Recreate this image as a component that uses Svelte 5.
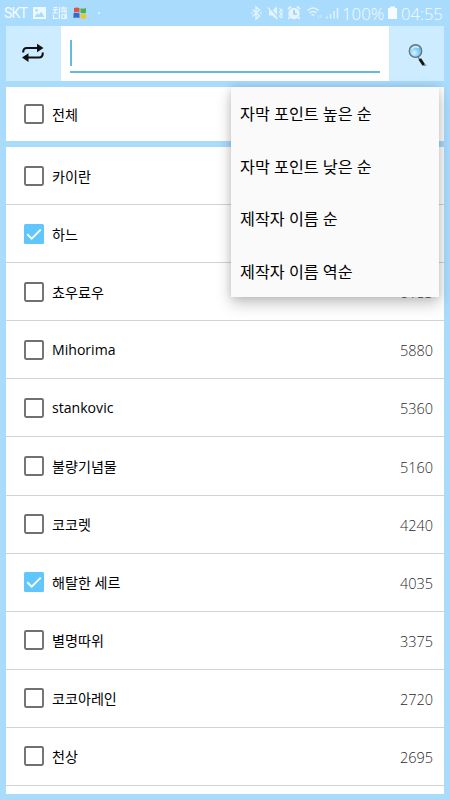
<script>
	let query = '';

	let makers = [
		{ name: '카이란', point: 8120 },
		{ name: '하느', point: 7315, checked: true },
		{ name: '쵸우료우', point: 6185 },
		{ name: 'Mihorima', point: 5880 },
		{ name: 'stankovic', point: 5360 },
		{ name: '불량기념물', point: 5160 },
		{ name: '코코렛', point: 4240 },
		{ name: '해탈한 세르', point: 4035, checked: true },
		{ name: '별명따위', point: 3375 },
		{ name: '코코아레인', point: 2720 },
		{ name: '천상', point: 2695 }
	];

	const sorts = ['자막 포인트 높은 순', '자막 포인트 낮은 순', '제작자 이름 순', '제작자 이름 역순'];

	let all = false;
</script>

{#snippet box(checked)}
	<svg class="box" width="20" height="20" viewBox="0 0 20 20">
		{#if checked}
			<rect width="20" height="20" rx="1.5" fill="#61c6fb" />
			<path d="M3.2 10.3l4.500 4.400 9-9" fill="none" stroke="#fff" stroke-width="1.900" />
		{:else}
			<rect x="1" y="1" width="18" height="18" rx="1.200" fill="#fff" stroke="#707070" stroke-width="1.900" />
		{/if}
	</svg>
{/snippet}

<main>
	<header class="status">
		<span class="carrier">SKT</span>
		<svg class="notices" width="72" height="26" viewBox="0 0 72 26">
			<path fill="#edf8ff" fill-rule="evenodd" d="M1 7h13v12H1zM2.5 17h10L9.3 11.8l-2.5 3-1.6-1.5zM4.5 9a1.3 1.3 0 1 0 .1 0z" />
			<path d="M21.500 7.700h4M20.800 9.700h5M23 10.200v3M20.500 13h5.500M27.500 7v6.500M29 8.200h4M31 6.500v2M30 10h2.500v2H30zM34 7v6.500M21.500 14.500v4h4M27.300 14v5M30 14.500h3v4h-3zM34.300 14v5" fill="none" stroke="#edf8ff" stroke-width="1.200" />
			<path fill="#df5440" d="M42 8q2.500-1 5.500 0v4.500q-2.500-1-5.500 0z" />
			<path fill="#52ae43" d="M48.500 8.300q3 1 5.500-.3v4.800q-2.500 1-5.500 0z" />
			<path fill="#3867ca" d="M41.500 13.300q3-1 6 0v4.600q-3-1-6 0z" />
			<path fill="#f0c42c" d="M48.500 13.800q3 1 5.500 0v4.600q-2.500 1-5.500-.4z" />
			<circle cx="67" cy="13" r="1" fill="#edf8ff" />
		</svg>
		<svg class="signals" width="92" height="26" viewBox="0 0 92 26">
			<path d="M2.500 9.500l7 6.500-3.500 3V7l3.500 3-7 6.500M1 13h1.500M10 13h1.500" fill="none" stroke="#e4f4ff" stroke-width="1.400" />
			<path d="M19 10.500h3l5-4v13l-5-4h-3z" fill="#e4f4ff" />
			<path d="M18.800 6.500L28.500 18" stroke="#a9dafa" stroke-width="1.200" />
			<path d="M18 7.500L27.500 19M29.500 8l1.500 2-1.500 2 1.500 2-1.500 2 1.500 2M32 9v9" fill="none" stroke="#e4f4ff" stroke-width="1.200" />
			<circle cx="44" cy="13.500" r="5.700" fill="#e4f4ff" />
			<path d="M38 9l3-2.500M47 6.500L50 9M39.800 17l-1.500 2M48.200 17l1.500 2" stroke="#e4f4ff" stroke-width="1.800" />
			<path d="M44 10v4h3" fill="none" stroke="#88bfe4" stroke-width="1.200" />
			<g fill="none" stroke="#e4f4ff" stroke-width="1.400">
				<path d="M57.500 10.500q5.500-5 11 0M59.500 13q3.500-3 7 0M61.500 15.300q1.500-1.300 3 0" />
			</g>
			<path d="M68.500 18v-3M71 15v3" stroke="#cfeaff" stroke-width="1" />
			<path d="M77 18.500v-2M80.500 18.500v-4.500M84 18.500v-7.500" stroke="#e4f4ff" stroke-width="1.400" />
			<path d="M87.500 18.500V8" stroke="#e4f4ff" stroke-width="1.500" />
		</svg>
		<span class="percent">100%</span>
		<svg class="battery" width="9" height="26" viewBox="0 0 9 26">
			<path d="M0 8h2V6.500h5V8h2v11H0z" fill="#f5fbff" />
		</svg>
		<span class="clock">04:55</span>
	</header>

	<div class="search">
		<button class="swap" aria-label="정렬">
			<svg width="24" height="20" viewBox="0 0 24 20">
				<path d="M2.200 9.500Q2 5 6 5h11M21.800 9.500q.2 5-3.800 5H7" fill="none" stroke="#111" stroke-width="2.100" />
				<path d="M16 .8L22.500 5 16 9.200zM7.500 10.300l-6.500 4.200 6.500 4.400z" fill="#111" />
			</svg>
		</button>
		<div class="field">
			<div class="input"><span class="caret"></span>{query}</div>
		</div>
		<button class="find" aria-label="검색">
			<svg width="22" height="26" viewBox="0 0 22 26">
				<defs>
					<radialGradient id="lens" cx="0.400" cy="0.650" r="0.650">
						<stop offset="0" stop-color="#d8f5ff" />
						<stop offset="0.500" stop-color="#8dd2f7" />
						<stop offset="1" stop-color="#5aaede" />
					</radialGradient>
				</defs>
				<path d="M11 15l2 3" stroke="#888" stroke-width="1.500" />
				<path d="M12.800 17l4 6" stroke="#151515" stroke-width="3" />
				<path d="M16.500 23.500l3-.5" stroke="#777" stroke-width="1" />
				<circle cx="8.500" cy="9" r="6.300" fill="url(#lens)" stroke="#62727e" stroke-width="1.200" />
				<path d="M4.500 7.500q3-4.500 7.500-1.500" fill="none" stroke="#d2f0ff" stroke-width="1.500" />
			</svg>
		</button>
	</div>

	<div class="row total">
		{@render box(all)}
		<span class="name">전체</span>
	</div>

	<div class="list">
		{#each makers as maker}
			<div class="row">
				{@render box(maker.checked)}
				<span class="name">{maker.name}</span>
				<span class="point">{maker.point}</span>
			</div>
		{/each}
	</div>

	<div class="menu">
		{#each sorts as sort}
			<div class="menu__item">{sort}</div>
		{/each}
	</div>
</main>

<style>
	:global(body) {
		background: #a9dbfd;
	}

	main {
		position: relative;
		box-sizing: border-box;
		width: 450px;
		height: 800px;
		padding: 0 6px;
		overflow: hidden;
		background: #a9dbfd;
		font-family: "Open Sans", "Noto Sans CJK KR", sans-serif;
		color: #111;
	}

	.status {
		display: flex;
		align-items: center;
		height: 26px;
		margin: 0 -6px;
		color: #f5fbff;
		font-weight: 300;
		line-height: 27px;
		white-space: nowrap;
	}

	.carrier {
		width: 28px;
		margin-left: 4px;
		font-family: Roboto, sans-serif;
		font-size: 14px;
		font-weight: 400;
		letter-spacing: -0.8px;
	}

	.signals {
		margin-left: 146px;
	}

	.percent {
		width: 46px;
		font-size: 16.8px;
	}

	.clock {
		margin-left: 4px;
		font-size: 16.6px;
	}

	.battery {
		flex: none;
	}

	.search {
		display: flex;
		height: 55px;
		margin-bottom: 6px;
		background: #fff;
	}

	button {
		display: flex;
		align-items: center;
		justify-content: center;
		width: 55px;
		padding: 0;
		border: 0;
		background: #cdecff;
	}

	.swap {
		padding: 0 2px 1px 0;
	}

	.find {
		padding: 2px 0 0 2px;
	}

	.field {
		flex: 1;
		padding: 14px 9px 0;
	}

	.input {
		height: 31px;
		border-bottom: 2px solid #66b9dc;
	}

	.caret {
		display: block;
		width: 2px;
		height: 26px;
		background: #66b9dc;
	}

	.row {
		display: flex;
		align-items: center;
		box-sizing: border-box;
		height: 58.1px;
		padding: 0 11px 0 18px;
		border-bottom: 1px solid #d2d2d2;
		background: #fff;
		font-size: 14.1px;
	}

	.total {
		height: 54px;
		margin-bottom: 6px;
		border: 0;
	}

	.box {
		flex: none;
		margin-right: 8px;
	}

	.name {
		flex: 1;
		color: #000;
	}

	.point {
		padding-top: 2px;
		color: #2a2a2a;
		font-size: 14.5px;
		font-weight: 300;
	}

	.list {
		height: 647px;
		overflow: hidden;
		background: #fff;
	}

	.menu {
		position: absolute;
		top: 87px;
		left: 231px;
		width: 208px;
		height: 210px;
		background: #fafafa;
		box-shadow: 0 7px 14px rgba(0, 0, 0, 0.22), 0 0 8px rgba(0, 0, 0, 0.12);
	}

	.menu__item {
		height: 52.5px;
		padding-left: 9px;
		color: #000;
		font-size: 16.2px;
		line-height: 54px;
	}
</style>
